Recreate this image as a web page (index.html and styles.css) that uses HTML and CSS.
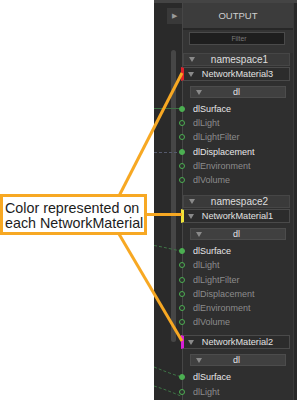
FILE: index.html
```html
<!DOCTYPE html>
<html>
<head>
  <title>NetworkMaterial colors</title>
  <link rel="stylesheet" href="styles.css">
</head>
<body>

  <!-- Callout -->
  <div class="note-col">
    <div class="note">Color represented on<br>each NetworkMaterial</div>
  </div>

  <!-- Node editor, output panel -->
  <div class="editor">
    <svg class="wires" width="30" height="400" viewBox="0 0 30 400">
      <line x1="0" y1="108.5" x2="29" y2="108.5" stroke="#3e6e44" stroke-width="1"/>
      <line x1="0" y1="152.5" x2="27" y2="152.5" stroke="#555a6c" stroke-width="1" stroke-dasharray="3 2"/>
      <path d="M0 245.5 C 10 247, 20 250, 28 251" fill="none" stroke="#3f7446" stroke-width="1" stroke-dasharray="3 2"/>
      <path d="M0 367 C 10 371, 20 375, 28 377" fill="none" stroke="#3f7446" stroke-width="1" stroke-dasharray="3 2"/>
      <path d="M0 386 C 10 389, 20 393, 29 397" fill="none" stroke="#3f7446" stroke-width="1" stroke-dasharray="3 2"/>
    </svg>

    <div class="gutter">
      <div class="play-btn">▶</div>
      <div class="scroll-track"></div>
    </div>

    <div class="output">
      <div class="out-header">OUTPUT</div>
      <div class="filter-bar"><div class="filter">Filter</div></div>

      <div class="tree">
        <div class="ns-row"><span class="tri"></span><span class="label">namespace1</span></div>
        <div class="mat-row mat-red"><span class="tri"></span><span class="label">NetworkMaterial3</span></div>
        <div class="dl-row"><span class="tri"></span><span class="label">dl</span></div>
        <ul class="ports">
          <li class="port on"><span class="dot"></span>dlSurface</li>
          <li class="port"><span class="dot"></span>dlLight</li>
          <li class="port"><span class="dot"></span>dlLightFilter</li>
          <li class="port on"><span class="dot"></span>dlDisplacement</li>
          <li class="port"><span class="dot"></span>dlEnvironment</li>
          <li class="port"><span class="dot"></span>dlVolume</li>
        </ul>

        <div class="ns-row"><span class="tri"></span><span class="label">namespace2</span></div>
        <div class="mat-row mat-yellow"><span class="tri"></span><span class="label">NetworkMaterial1</span></div>
        <div class="dl-row"><span class="tri"></span><span class="label">dl</span></div>
        <ul class="ports">
          <li class="port on"><span class="dot"></span>dlSurface</li>
          <li class="port"><span class="dot"></span>dlLight</li>
          <li class="port"><span class="dot"></span>dlLightFilter</li>
          <li class="port"><span class="dot"></span>dlDisplacement</li>
          <li class="port"><span class="dot"></span>dlEnvironment</li>
          <li class="port"><span class="dot"></span>dlVolume</li>
        </ul>

        <div class="mat-row mat-magenta"><span class="tri"></span><span class="label">NetworkMaterial2</span></div>
        <div class="dl-row"><span class="tri"></span><span class="label">dl</span></div>
        <ul class="ports">
          <li class="port on"><span class="dot"></span>dlSurface</li>
          <li class="port"><span class="dot"></span>dlLight</li>
        </ul>
      </div>
    </div>

    <div class="edge"></div>
  </div>

  <!-- Callout leader lines -->
  <svg class="leaders" width="297" height="400" viewBox="0 0 297 400">
    <line x1="119" y1="196" x2="182" y2="73" stroke="#f7a823" stroke-width="3"/>
    <line x1="146" y1="214.5" x2="182" y2="214.5" stroke="#f7a823" stroke-width="3"/>
    <line x1="119" y1="234" x2="182" y2="341" stroke="#f7a823" stroke-width="3"/>
  </svg>

</body>
</html>
```

FILE: styles.css
```css
:root {
  --orange: #f7a823;
  --green: #4caf52;
  --panel: #2f2f2f;
  --gutter: #2a2a2a;
  --line: #464646;
}

body {
  margin: 0;
  width: 297px;
  height: 400px;
  overflow: hidden;
  display: flex;
  background: #ffffff;
  font-family: "Liberation Sans", Arial, sans-serif;
  position: relative;
}

/* Callout */
.note-col {
  width: 154px;
  flex-shrink: 0;
  padding-top: 194px;
  box-sizing: border-box;
}

.note {
  width: 147px;
  height: 41px;
  box-sizing: border-box;
  border: 3px solid var(--orange);
  padding: 4px 0 0 2px;
  font-family: "Liberation Sans", Arial, sans-serif;
  font-size: 14.3px;
  line-height: 15px;
  color: #1c1c1c;
  white-space: nowrap;
  overflow: hidden;
}

.leaders {
  position: absolute;
  top: 0;
  left: 0;
  pointer-events: none;
}

/* Editor */
.editor {
  position: relative;
  width: 143px;
  height: 400px;
  display: flex;
  background: var(--gutter);
  border-top: 3px solid #444;
  box-sizing: border-box;
}

.wires {
  position: absolute;
  top: -3px;
  left: 0;
}

.gutter {
  width: 28px;
  flex-shrink: 0;
  padding-top: 5px;
  display: flex;
  flex-direction: column;
  box-sizing: border-box;
}

.play-btn {
  width: 15px;
  height: 16px;
  margin-left: 13px;
  background: #393939;
  color: #9a9a9a;
  font-size: 7px;
  line-height: 16px;
  text-align: center;
}

.scroll-track {
  width: 5px;
  height: 292px;
  margin: 26px 0 0 17px;
  border-radius: 3px;
  background: #464646;
}

.output {
  position: relative;
  width: 111px;
  flex-shrink: 0;
  background: var(--panel);
  border-left: 1px solid var(--line);
  box-sizing: border-box;
}

.out-header {
  height: 25px;
  background: #3c3c3c;
  border-bottom: 2px solid #272727;
  display: flex;
  align-items: center;
  justify-content: center;
  color: #cfcfcf;
  font-size: 9.5px;
}

.filter-bar {
  padding: 2px 8px 8px 6px;
  background: #343434;
}

.filter {
  height: 13px;
  box-sizing: border-box;
  background: #1e1e1e;
  border: 1px solid #4a4a4a;
  color: #7a7a7a;
  font-size: 6.8px;
  line-height: 11px;
  text-align: center;
  padding-left: 4px;
}

.edge {
  flex: 1;
  background: #282828;
  border-left: 1px solid #3a3a3a;
}

/* Tree rows */
.ns-row, .mat-row, .dl-row {
  display: flex;
  align-items: center;
  box-sizing: border-box;
  padding-left: 5px;
}

.tri {
  width: 0;
  height: 0;
  border-left: 3px solid transparent;
  border-right: 3px solid transparent;
  border-top: 5px solid #8a8a8a;
}

.label {
  flex: 1;
  text-align: center;
  white-space: nowrap;
}

.ns-row {
  height: 13px;
  margin-right: 3px;
  background: #3a3a3a;
  border: 1px solid #464646;
  color: #dedede;
  font-size: 10px;
}

.ns-row .label {
  padding-right: 5px;
}

.ports + .ns-row {
  margin-top: 8px;
}

.mat-row {
  height: 14px;
  margin: 1px 3px 0 -2px;
  background: #2c2c2c;
  border: 1px solid #4a4a4a;
  border-left-width: 3px;
  padding-left: 4px;
  color: #e2e2e2;
  font-size: 9.2px;
}

.mat-row .label {
  padding-right: 8px;
}

.ports + .mat-row {
  margin-top: 6px;
}

.mat-red { border-left-color: #e0202a; }
.mat-yellow { border-left-color: #efe43a; }
.mat-magenta { border-left-color: #d81fd8; }

.dl-row {
  height: 12px;
  margin: 5px 7px 0 7px;
  background: #404040;
  border: 1px solid #4c4c4c;
  color: #e6e6e6;
  font-size: 9px;
}

.dl-row .label {
  padding-right: 14px;
}

/* Ports */
.ports {
  list-style: none;
  margin: 4px 0 0 0;
  padding: 0;
}

.port {
  height: 14.2px;
  display: flex;
  align-items: center;
  font-size: 9px;
  color: #8c8c8c;
  white-space: nowrap;
}

.port.on {
  color: #e8e8e8;
}

.dot {
  width: 6px;
  height: 6px;
  box-sizing: border-box;
  margin: 0 8px 0 -4px;
  border-radius: 50%;
  border: 1.5px solid var(--green);
  background: var(--panel);
}

.port.on .dot {
  background: var(--green);
}
```
